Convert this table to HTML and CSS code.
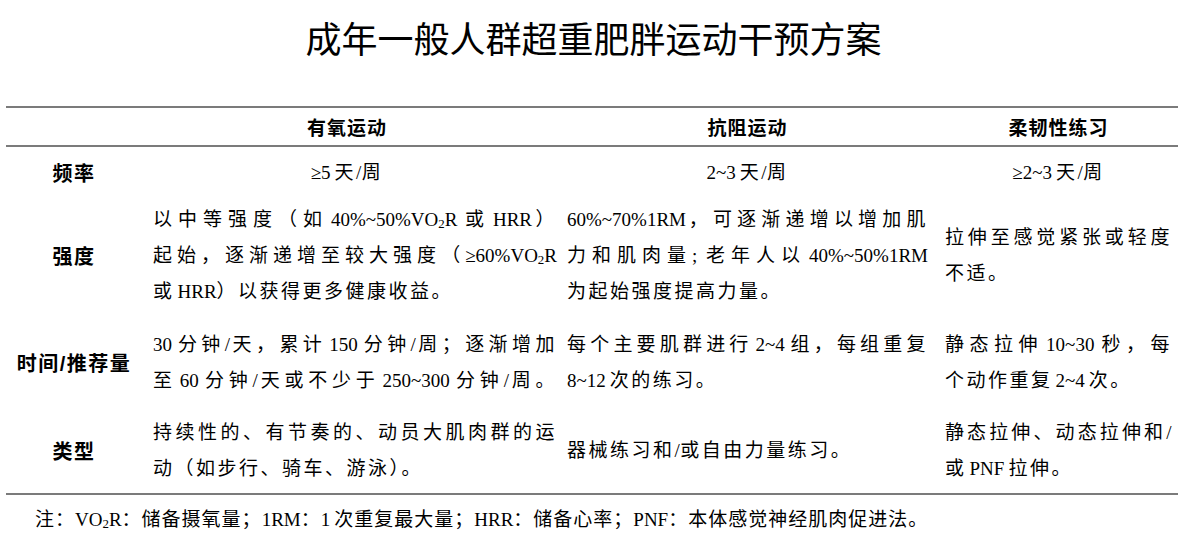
FILE: index.html
```html
<!DOCTYPE html>
<html lang="zh-CN">
<head>
<meta charset="utf-8">
<title>成年一般人群超重肥胖运动干预方案</title>
<link rel="stylesheet" href="styles.css">
</head>
<body>
<h1 class="title">成年一般人群超重肥胖运动干预方案</h1>
<div class="table">
  <div class="row head">
    <div class="cell label"></div>
    <div class="cell col2 center">有氧运动</div>
    <div class="cell col3 center">抗阻运动</div>
    <div class="cell col4 center">柔韧性练习</div>
  </div>
  <div class="row freq">
    <div class="cell label">频率</div>
    <div class="cell col2 center"><span class="en s">≥5</span>天<span class="sl">/</span>周</div>
    <div class="cell col3 center"><span class="en s">2~3</span>天<span class="sl">/</span>周</div>
    <div class="cell col4 center"><span class="en s">≥2~3</span>天<span class="sl">/</span>周</div>
  </div>
  <div class="row intensity">
    <div class="cell label">强度</div>
    <div class="cell col2">
      <span class="ln j">以中等强度（如<span class="en">40%~50%VO<sub class="sub">2</sub>R</span>或<span class="en e">HRR</span>）</span>
      <span class="ln j">起始，逐渐递增至较大强度（<span class="en s e">≥60%VO<sub class="sub">2</sub>R</span></span>
      <span class="ln">或<span class="en e">HRR</span>）以获得更多健康收益。</span>
    </div>
    <div class="cell col3">
      <span class="ln j"><span class="en s e">60%~70%1RM</span>，可逐渐递增以增加肌</span>
      <span class="ln j">力和肌肉量<span class="en s sc">;</span>老年人以<span class="en e">40%~50%1RM</span></span>
      <span class="ln">为起始强度提高力量。</span>
    </div>
    <div class="cell col4">
      <span class="ln j">拉伸至感觉紧张或轻度</span>
      <span class="ln">不适。</span>
    </div>
  </div>
  <div class="row time">
    <div class="cell label">时间<span class="lsl">/</span>推荐量</div>
    <div class="cell col2">
      <span class="ln j"><span class="en s">30</span>分钟<span class="sl">/</span>天，累计<span class="en">150</span>分钟<span class="sl">/</span>周；逐渐增加</span>
      <span class="ln j">至<span class="en">60</span>分钟<span class="sl">/</span>天或不少于<span class="en">250~300</span>分钟<span class="sl">/</span>周。</span>
    </div>
    <div class="cell col3">
      <span class="ln j">每个主要肌群进行<span class="en">2~4</span>组，每组重复</span>
      <span class="ln"><span class="en s">8~12</span>次的练习。</span>
    </div>
    <div class="cell col4">
      <span class="ln j">静态拉伸<span class="en">10~30</span>秒，每</span>
      <span class="ln">个动作重复<span class="en">2~4</span>次。</span>
    </div>
  </div>
  <div class="row type">
    <div class="cell label">类型</div>
    <div class="cell col2">
      <span class="ln j">持续性的、有节奏的、动员大肌肉群的运</span>
      <span class="ln">动（如步行、骑车、游泳）。</span>
    </div>
    <div class="cell col3">
      <span class="ln">器械练习和<span class="sl">/</span>或自由力量练习。</span>
    </div>
    <div class="cell col4">
      <span class="ln j">静态拉伸、动态拉伸和<span class="sl">/</span></span>
      <span class="ln">或<span class="en">PNF</span>拉伸。</span>
    </div>
  </div>
</div>
<p class="note">注：<span class="en s e">VO<sub class="sub">2</sub>R</span>：储备摄氧量；<span class="en s e">1RM</span>：<span class="en s">1</span>次重复最大量；<span class="en s e">HRR</span>：储备心率；<span class="en s e">PNF</span>：本体感觉神经肌肉促进法。</p>
</body>
</html>
```
FILE: styles.css
```css
html, body {
  margin: 0;
  padding: 0;
  background: #ffffff;
}

body {
  width: 1187px;
  color: #000000;
  font-family: "Liberation Serif", "Noto Sans CJK SC", serif;
  font-size: 19px;
}

.title {
  margin: 13px 0 45px;
  height: 48px;
  line-height: 48px;
  text-align: center;
  font-family: "Noto Sans CJK SC", sans-serif;
  font-size: 36px;
  font-weight: 400;
  letter-spacing: 0;
}

.table {
  margin: 0 9px 0 6px;
  border-top: 2px solid #7b7b7b;
  border-bottom: 2px solid #7b7b7b;
}

.row {
  display: grid;
  grid-template-columns: 136px 420px 373px 243px;
  align-items: center;
}

.head {
  height: 37px;
  border-bottom: 2px solid #7b7b7b;
}

.freq { height: 52px; }
.intensity { height: 114px; }
.time { height: 100px; }
.type { height: 76px; padding-bottom: 4px; }

.cell {
  letter-spacing: 2.5px;
  line-height: 36px;
}

.label {
  text-align: center;
  font-family: "Noto Sans CJK SC", sans-serif;
  font-weight: 700;
  font-size: 20px;
  letter-spacing: 1.5px;
}

.lsl {
  font-family: "Liberation Sans", sans-serif;
}

.head .cell {
  font-family: "Noto Sans CJK SC", sans-serif;
  font-weight: 700;
  font-size: 19px;
  letter-spacing: 1px;
}

.col2 { padding: 0 5px 0 11px; }
.col3 { padding: 0 7px 0 5px; }
.col4 { padding: 0 6px 0 10px; }

.center { text-align: center; }
.col2.center { padding-right: 21px; }

.ln {
  display: block;
  line-height: 36px;
  white-space: nowrap;
}

.j {
  text-align: justify;
  text-align-last: justify;
}

.en {
  letter-spacing: 0;
  margin: 0 4px 0 3px;
}

.en.s { margin-left: 0; }
.en.e { margin-right: 0; }
.en.sc { margin-right: 5px; }

.sl {
  letter-spacing: 0.5px;
}

.sub {
  font-size: 0.68em;
  vertical-align: -0.15em;
  line-height: 0;
  letter-spacing: 0;
}

.note {
  margin: 7px 0 0 35px;
  line-height: 36px;
  letter-spacing: 1px;
}
```
